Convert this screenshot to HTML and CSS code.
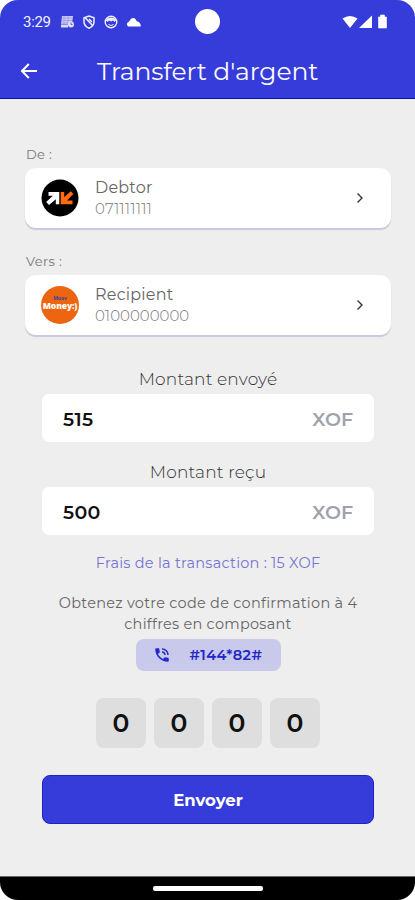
FILE: index.html
```html
<!DOCTYPE html>
<html lang="fr">
<head>
<meta charset="utf-8">
<title>Transfert d'argent</title>
<link rel="stylesheet" href="styles.css">
</head>
<body>
<div class="phone">
  <header class="header">
    <div class="status">
      <span class="time">3:29</span>
      <svg class="st" viewBox="0 0 14 14"><path d="M2 1h11l-1 8H1z" fill="#c9cbf5"/><path d="M2 3h10M2 5.500h10M1 8h8M4 1v8M8 1v8" stroke="#9a9de6" stroke-width=".8"/><path d="M1 9.500h7v3H1z" fill="#d9daf8"/><circle cx="11" cy="9.500" r="3" fill="#dfe0fa"/><path d="M11 7.500v2h1.500" stroke="#555adc" fill="none"/></svg>
      <svg class="st" viewBox="0 0 14 14" fill="none" stroke="#eeeefe" stroke-width="1.500"><path d="M7 1l5 1.800v4C12 9.800 10 12 7 13.200 4 12 2 9.800 2 6.800v-4z"/><path d="M3 2.500l7.500 8M7 4l3 3"/></svg>
      <svg class="st" viewBox="0 0 14 14"><circle cx="7" cy="7" r="5.800" fill="none" stroke="#eeeefe" stroke-width="1.400"/><path d="M2 5.500C3 1.500 11 1.500 12 5.500L10.500 7 9 5.500 7 6.500 5 5.500 3.500 7z" fill="#eeeefe"/><path d="M4.500 9.500q2.500 2 5 0" stroke="#eeeefe" fill="none"/></svg>
      <svg class="st cloud" viewBox="0 0 15 14"><path d="M2.500 11.500a2.400 2.400 0 0 1 0-4.500C4 6 4.500 3 7 3c2.200 0 3 1.500 3.700 3.200C13 6.500 14.800 8 14.800 11.500z" fill="#fff"/></svg>
      <span class="camera"></span>
      <svg class="signal" viewBox="0 0 48 16" fill="#fff"><path d="M.5 4.500Q8 -.5 15.500 4.500L8 14z"/><path d="M30 1.500V14H17z"/><path d="M36.500 3H38.500V1h4v2h2v11h-8z" stroke="#fff" stroke-width=".6" stroke-linejoin="round"/></svg>
    </div>
    <div class="bar">
      <svg class="back" viewBox="0 0 18 16" fill="none" stroke="#fff" stroke-width="2"><path d="M17 8H2M8.800 1L2 8l6.800 7"/></svg>
      <h1 class="title">Transfert d'argent</h1>
    </div>
  </header>
  <main class="main">
    <div class="label from">De :</div>
    <div class="card">
      <svg class="logo" viewBox="0 0 38 38"><circle cx="19" cy="19" r="18.500" fill="#000"/><path d="M7.500 13H18.300v12.300h-3.500v-5.100L8 26l-2.800-3 6.600-6.300H7.500z" fill="#fff"/><path d="M19.700 25.300V13h3.500v5.100L29.800 12.300l2.600 2.800-6.400 6.400h5.500v3.800z" fill="#ff6b13"/></svg>
      <div class="info"><div class="name debtor">Debtor</div><div class="num num1">071111111</div></div>
      <svg class="chev" viewBox="0 0 8 12" fill="none" stroke="#333" stroke-width="1.400"><path d="M1.500 1.500L6 6l-4.500 4.500"/></svg>
    </div>
    <div class="label to">Vers :</div>
    <div class="card">
      <div class="logo money"><span class="brand-top">Moov</span><span class="brand">Money:)</span></div>
      <div class="info"><div class="name recipient">Recipient</div><div class="num num2">0100000000</div></div>
      <svg class="chev" viewBox="0 0 8 12" fill="none" stroke="#333" stroke-width="1.400"><path d="M1.500 1.500L6 6l-4.500 4.500"/></svg>
    </div>
    <section class="form">
      <div class="caption sent">Montant envoyé</div>
      <div class="field"><span class="value">515</span><span class="unit">XOF</span></div>
      <div class="caption received">Montant reçu</div>
      <div class="field"><span class="value">500</span><span class="unit">XOF</span></div>
      <div class="fee">Frais de la transaction : 15 XOF</div>
      <div class="help">Obtenez votre code de confirmation à 4<br>chiffres en composant</div>
      <div class="ussd">
        <svg class="call" viewBox="0 0 24 24" fill="#2427cf"><path d="M20 15.500c-1.250 0-2.450-.2-3.570-.57-.35-.11-.74-.03-1.020.24l-2.200 2.200c-2.830-1.440-5.150-3.750-6.590-6.580l2.200-2.210c.28-.27.360-.66.250-1.010C8.700 6.450 8.500 5.250 8.500 4c0-.55-.45-1-1-1H4c-.55 0-1 .45-1 1 0 9.390 7.610 17 17 17 .55 0 1-.45 1-1v-3.500c0-.55-.45-1-1-1zM19 12h2c0-4.970-4.030-9-9-9v2c3.870 0 7 3.130 7 7zm-4 0h2c0-2.760-2.240-5-5-5v2c1.660 0 3 1.340 3 3z"/></svg>
        <span class="code">#144*82#</span>
      </div>
      <div class="pins"><span class="pin">0</span><span class="pin">0</span><span class="pin">0</span><span class="pin">0</span></div>
      <button class="send">Envoyer</button>
    </section>
  </main>
  <footer class="nav"><span class="handle"></span></footer>
</div>
</body>
</html>
```
FILE: styles.css
```css
* { box-sizing: border-box; }
body { margin: 0; background: #fff; font-family: Montserrat, Inter, "Liberation Sans", sans-serif; }
.phone { width: 415px; height: 900px; display: flex; flex-direction: column; background: #eee; border-radius: 18px; overflow: hidden; }
.header { height: 99px; background: #353cda; border-bottom: 1px solid #0c10bb; position: relative; flex: none; }
.status { height: 43px; display: flex; align-items: center; padding-left: 23px; }
.time { width: 37px; font: 15px Roboto, sans-serif; letter-spacing: -.3px; color: #f2f2ff; }
.st { width: 14px; height: 14px; margin-right: 8px; }
.cloud { width: 15px; }
.camera { width: 25px; height: 25px; border-radius: 50%; background: #fff; position: absolute; left: 195px; top: 9px; }
.signal { width: 48px; height: 16px; margin-left: auto; margin-right: 25px; }
.bar { height: 56px; display: flex; align-items: center; padding-left: 20px; }
.back { width: 18px; height: 16px; }
.title { margin: 0 0 0 59px; font-size: 25px; line-height: 32px; font-weight: 400; color: #fafaff; white-space: nowrap; letter-spacing: -.1px; }
.main { flex: 1; padding: 46px 24px 0 25px; }
.label { height: 23px; font-size: 13px; line-height: 18px; font-weight: 400; color: #777; padding-left: 1px; letter-spacing: .35px; }
.to { margin-top: 24px; }
.card { height: 60px; border-radius: 11px; background: #fff; box-shadow: 0 1.500px 1px #c8c8dc; display: flex; align-items: center; padding: 0 27px 0 16px; }
.logo { width: 38px; height: 38px; flex: none; }
.money { border-radius: 50%; background: #ee6511; display: flex; flex-direction: column; align-items: center; padding-top: 10px; }
.brand { font: 800 8.500px/9px "Open Sans", sans-serif; color: #fff; letter-spacing: -.1px; }
.brand-top { font: 700 5px/5px "Open Sans", sans-serif; color: #34459b; }
.info { margin-left: 16px; flex: 1; }
.name { font-size: 16px; line-height: 21px; font-weight: 400; color: #666; letter-spacing: .2px; }
.num { font-size: 15px; line-height: 21px; font-weight: 300; color: #777; }
.num1 { letter-spacing: .15px; }
.chev { width: 8px; height: 12px; }
.form { padding: 0 17px; text-align: center; }
.caption { font-size: 17px; line-height: 22px; font-weight: 300; color: #333; letter-spacing: .15px; white-space: nowrap; }
.sent { margin-top: 33px; }
.received { margin-top: 19px; }
.field { height: 48px; margin-top: 4px; background: #fff; border-radius: 7px; display: flex; align-items: center; justify-content: space-between; padding: 2px 21px 0 21px; font-size: 19px; font-weight: 600; color: #111; }
.value { letter-spacing: .3px; }
.unit { color: #9fa2aa; }
.fee { margin-top: 18px; font-size: 14.500px; line-height: 20px; color: #7773d2; letter-spacing: .25px; white-space: nowrap; font-weight: 400; }
.help { margin: 20px -10px 0; font-size: 14.500px; line-height: 21px; font-weight: 400; color: #666; letter-spacing: .26px; white-space: nowrap; }
.ussd { width: 145px; height: 32px; margin: 4px auto 0; border-radius: 8px; background: #c9c9eb; display: flex; align-items: center; padding-left: 17px; }
.call { width: 18px; height: 18px; }
.code { margin-left: 19px; font-size: 14.500px; font-weight: 600; color: #2225c7; letter-spacing: .4px; margin-top: -1px; }
.pins { display: flex; gap: 8px; justify-content: center; margin-top: 27px; }
.pin { width: 50px; height: 50px; border-radius: 8px; background: #dedede; font-size: 25px; line-height: 51px; font-weight: 600; color: #111; }
.send { display: block; width: 100%; height: 49px; margin-top: 27px; border: 1px solid #1c21cc; border-radius: 8px; background: #353cda; color: #fff; font: 700 16.500px Montserrat, Inter, sans-serif; padding: 0; }
.nav { flex: none; height: 24px; background: #000; border-top: 1px solid #666; display: flex; justify-content: center; padding-top: 9px; }
.handle { width: 110px; height: 5px; border-radius: 2px; background: #fff; }
```
